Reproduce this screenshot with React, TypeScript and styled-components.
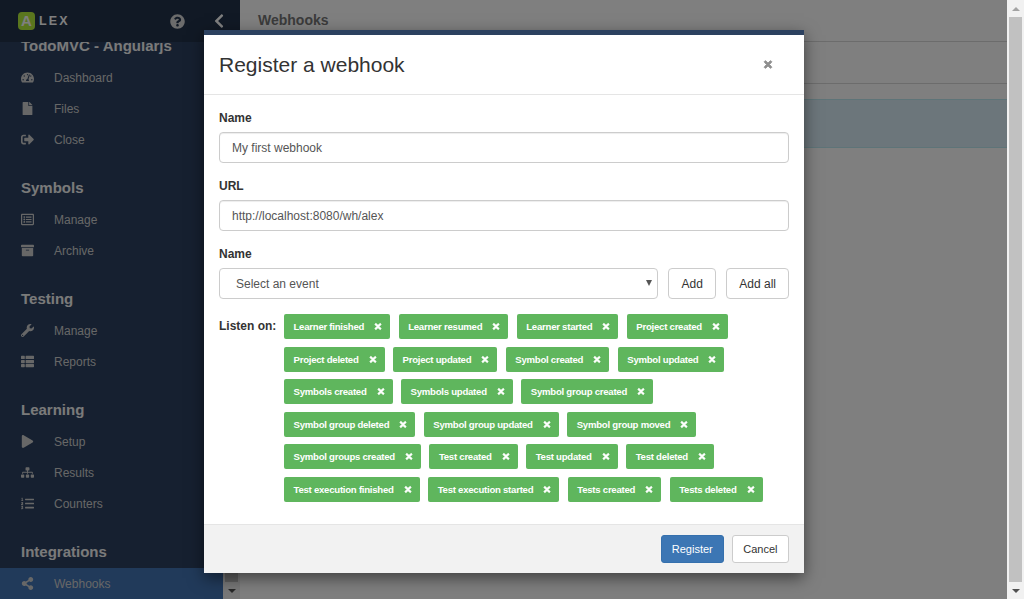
import styled, { createGlobalStyle } from "styled-components";
import {
  FaArchive,
  FaChevronLeft,
  FaFile,
  FaListOl,
  FaPlay,
  FaQuestionCircle,
  FaRegListAlt,
  FaShareAlt,
  FaSignOutAlt,
  FaSitemap,
  FaTachometerAlt,
  FaThList,
  FaTimes,
  FaWrench,
} from "react-icons/fa";

const GlobalStyle = createGlobalStyle`
  html, body {
    margin: 0;
    height: 100%;
    overflow: hidden;
    font-family: "Liberation Sans", Arial, sans-serif;
    font-size: 14px;
    color: #333;
  }
  * { box-sizing: border-box; }
`;

const Screen = styled.div`
  display: flex;
  width: 1024px;
  height: 599px;
  overflow: hidden;
`;

const Stage = styled.div`
  position: relative;
  display: flex;
  flex: 1;
  min-width: 0;
`;

const Sidebar = styled.aside`
  display: flex;
  flex-direction: column;
  width: 240px;
  background: #2c4160;
  color: #f5f5f5;
`;

const Brand = styled.div`
  position: relative;
  z-index: 1;
  display: flex;
  align-items: center;
  flex: 0 0 42px;
  padding: 0 13px 1px 18px;
  background: #22324b;
`;

const LogoMark = styled.span`
  display: flex;
  align-items: center;
  justify-content: center;
  width: 17px;
  height: 18px;
  border-radius: 4px;
  background: #b4ec3c;
  color: #fff;
  font-size: 15px;
  font-weight: bold;
`;

const LogoText = styled.span`
  margin-left: 4px;
  flex: 1;
  color: #fff;
  font-size: 12.5px;
  font-weight: bold;
  letter-spacing: 2.2px;
`;

const HelpIcon = styled(FaQuestionCircle)`
  font-size: 15px;
  color: #d8d8d8;
  margin: 1px 26px 0 0;
`;

const Collapse = styled(FaChevronLeft)`
  font-size: 16px;
  color: #fff;
`;

const SideBody = styled.div`
  display: flex;
  flex: 1;
  min-height: 0;
`;

const SideNav = styled.nav`
  display: flex;
  flex-direction: column;
  flex: 1;
  min-width: 0;
  overflow: hidden;
`;

const ProjectTitle = styled.div`
  margin-top: -5px;
  padding-left: 21px;
  height: 25px;
  line-height: 18px;
  font-size: 15px;
  font-weight: bold;
  white-space: nowrap;
`;

const Group = styled.div<{ $gap: number }>`
  display: flex;
  flex-direction: column;
  margin-top: ${({ $gap }) => $gap}px;
`;

const GroupTitle = styled.div`
  height: 32px;
  line-height: 32px;
  padding-left: 21px;
  font-size: 15px;
  font-weight: bold;
`;

const NavItem = styled.a<{ $active?: boolean }>`
  display: flex;
  align-items: center;
  height: 31px;
  padding-left: 21px;
  font-size: 12px;
  color: #cfcfcf;
  background: ${({ $active }) => ($active ? "#4274b4" : "transparent")};

  svg {
    width: 13px;
    height: 13px;
    margin-right: 20px;
    flex: none;
  }
`;

const SideScroll = styled.div`
  display: flex;
  flex-direction: column;
  justify-content: flex-end;
  width: 17px;
  background: #f1f1f1;
`;

const SideThumb = styled.div`
  height: 13px;
  margin: 0 2px;
  background: #c1c1c1;
`;

const SideArrow = styled.div`
  display: flex;
  align-items: center;
  justify-content: center;
  height: 17px;
`;

const Main = styled.main`
  display: flex;
  flex-direction: column;
  flex: 1;
  min-width: 0;
  background: #fff;
`;

const PageHead = styled.div`
  flex: 0 0 42px;
  padding: 12px 18px 0;
  font-size: 14px;
  font-weight: bold;
  color: #777;
  border-bottom: 1px solid #d8d8d8;
`;

const ActionBar = styled.div`
  flex: 0 0 42px;
  border-bottom: 1px solid #d8d8d8;
`;

const InfoBar = styled.div`
  flex: 0 0 49px;
  margin-top: 15px;
  background: #d9edf7;
  border-bottom: 1px solid #bce8f1;
  border-top: 1px solid #bce8f1;
`;

const Backdrop = styled.div`
  position: absolute;
  inset: 0;
  z-index: 2;
  background: rgba(0, 0, 0, 0.5);
`;

const Modal = styled.div`
  position: absolute;
  z-index: 3;
  left: 204px;
  top: 30px;
  display: flex;
  flex-direction: column;
  width: 600px;
  height: 543px;
  background: #fff;
  border-top: 5px solid #2c4160;
  box-shadow: 0 5px 15px rgba(0, 0, 0, 0.5);
`;

const ModalHead = styled.header`
  display: flex;
  align-items: center;
  justify-content: space-between;
  flex: 0 0 60px;
  padding: 0 31px 0 15px;
  border-bottom: 1px solid #e5e5e5;
`;

const ModalTitle = styled.h4`
  margin: 0;
  font-size: 21px;
  font-weight: normal;
  color: #333;
`;

const CloseIcon = styled(FaTimes)`
  width: 10px;
  height: 11px;
  color: #8f8f8f;
  stroke: currentColor;
  stroke-width: 40;
`;

const ModalBody = styled.div`
  display: flex;
  flex-direction: column;
  flex: 1;
  min-height: 0;
  padding: 15px;
`;

const Field = styled.div`
  display: flex;
  flex-direction: column;
  margin-bottom: 15px;
`;

const Label = styled.label`
  height: 20px;
  margin-bottom: 2px;
  line-height: 16px;
  font-size: 12px;
  font-weight: bold;
  color: #333;
`;

const TextInput = styled.div`
  display: flex;
  align-items: center;
  height: 31px;
  padding: 0 12px;
  border: 1px solid #ccc;
  border-radius: 4px;
  font-size: 12px;
  color: #555;
  box-shadow: inset 0 1px 1px rgba(0, 0, 0, 0.075);
`;

const EventRow = styled.div`
  display: flex;
  gap: 10px;
`;

const SelectBox = styled.div`
  position: relative;
  display: flex;
  align-items: center;
  flex: 1;
  height: 31px;
  padding-left: 16px;
  border: 1px solid #ccc;
  border-radius: 4px;
  font-size: 12px;
  color: #555;

  &::after {
    content: "";
    position: absolute;
    right: 5px;
    top: 11px;
    border-left: 3.5px solid transparent;
    border-right: 3.5px solid transparent;
    border-top: 6px solid #555;
  }
`;

const Button = styled.button`
  min-width: 48px;
  height: 31px;
  padding: 0 12px;
  border: 1px solid #ccc;
  border-radius: 4px;
  background: #fff;
  color: #333;
  font-family: inherit;
  font-size: 12px;
`;

const FootButton = styled(Button)<{ $primary?: boolean }>`
  height: 28px;
  padding: 0 ${({ $primary }) => ($primary ? 10 : 10.5)}px;
  border-radius: 3px;
  border-color: ${({ $primary }) => ($primary ? "#3570ad" : "#ccc")};
  background: ${({ $primary }) => ($primary ? "#3c76b4" : "#fff")};
  color: ${({ $primary }) => ($primary ? "#fff" : "#333")};
  font-size: 11px;
`;

const ListenRow = styled.div`
  display: flex;
`;

const ListenLabel = styled.div`
  flex: 0 0 65px;
  padding-top: 5px;
  font-size: 12px;
  font-weight: bold;
  color: #333;
`;

const Tags = styled.div`
  display: flex;
  flex-direction: column;
  flex: 1;
  gap: 7.5px;
`;

const TagRow = styled.div`
  display: flex;
  gap: 8.5px;
`;

const Tag = styled.span`
  display: flex;
  align-items: center;
  gap: 10px;
  height: 25px;
  padding: 0 8px 0 9.5px;
  border-radius: 2px;
  background: #5fb65d;
  color: #fff;
  font-size: 9.6px;
  font-weight: bold;
  letter-spacing: -0.25px;
  white-space: nowrap;

  svg {
    width: 8px;
    height: 9px;
    stroke: currentColor;
    stroke-width: 40;
  }
`;

const ModalFoot = styled.footer`
  display: flex;
  align-items: center;
  justify-content: flex-end;
  gap: 8px;
  flex: 0 0 49px;
  padding: 0 15px;
  background: #f2f2f2;
  border-top: 1px solid #e5e5e5;
`;

const PageScroll = styled.div`
  display: flex;
  flex-direction: column;
  width: 17px;
  background: #f1f1f1;
`;

const PageThumb = styled.div`
  flex: 1;
  margin: 0 2px;
  background: #c1c1c1;
`;

const Arrow = styled.div<{ $up?: boolean; $color?: string }>`
  width: 0;
  height: 0;
  border-left: 4px solid transparent;
  border-right: 4px solid transparent;
  ${({ $up, $color = "#505050" }) =>
    $up ? `border-bottom: 4px solid ${$color};` : `border-top: 4px solid ${$color};`}
`;

const PageArrow = styled(SideArrow)`
  flex: none;
`;

const EVENT_ROWS = [
  ["Learner finished", "Learner resumed", "Learner started", "Project created"],
  ["Project deleted", "Project updated", "Symbol created", "Symbol updated"],
  ["Symbols created", "Symbols updated", "Symbol group created"],
  ["Symbol group deleted", "Symbol group updated", "Symbol group moved"],
  ["Symbol groups created", "Test created", "Test updated", "Test deleted"],
  ["Test execution finished", "Test execution started", "Tests created", "Tests deleted"],
];

export default function App() {
  return (
    <Screen>
      <GlobalStyle />
      <Stage>
        <Sidebar>
          <Brand>
            <LogoMark>A</LogoMark>
            <LogoText>LEX</LogoText>
            <HelpIcon />
            <Collapse />
          </Brand>
          <SideBody>
            <SideNav>
              <ProjectTitle>TodoMVC - Angularjs</ProjectTitle>
              <Group $gap={0}>
                <NavItem><FaTachometerAlt />Dashboard</NavItem>
                <NavItem><FaFile />Files</NavItem>
                <NavItem><FaSignOutAlt />Close</NavItem>
              </Group>
              <Group $gap={17}>
                <GroupTitle>Symbols</GroupTitle>
                <NavItem><FaRegListAlt />Manage</NavItem>
                <NavItem><FaArchive />Archive</NavItem>
              </Group>
              <Group $gap={17}>
                <GroupTitle>Testing</GroupTitle>
                <NavItem><FaWrench />Manage</NavItem>
                <NavItem><FaThList />Reports</NavItem>
              </Group>
              <Group $gap={17}>
                <GroupTitle>Learning</GroupTitle>
                <NavItem><FaPlay />Setup</NavItem>
                <NavItem><FaSitemap />Results</NavItem>
                <NavItem><FaListOl />Counters</NavItem>
              </Group>
              <Group $gap={17}>
                <GroupTitle>Integrations</GroupTitle>
                <NavItem $active><FaShareAlt />Webhooks</NavItem>
              </Group>
            </SideNav>
            <SideScroll>
              <SideThumb />
              <SideArrow><Arrow /></SideArrow>
            </SideScroll>
          </SideBody>
        </Sidebar>
        <Main>
          <PageHead>Webhooks</PageHead>
          <ActionBar />
          <InfoBar />
        </Main>
        <Backdrop />
        <Modal>
          <ModalHead>
            <ModalTitle>Register a webhook</ModalTitle>
            <CloseIcon />
          </ModalHead>
          <ModalBody>
            <Field>
              <Label>Name</Label>
              <TextInput>My first webhook</TextInput>
            </Field>
            <Field>
              <Label>URL</Label>
              <TextInput>http://localhost:8080/wh/alex</TextInput>
            </Field>
            <Field>
              <Label>Name</Label>
              <EventRow>
                <SelectBox>Select an event</SelectBox>
                <Button>Add</Button>
                <Button>Add all</Button>
              </EventRow>
            </Field>
            <ListenRow>
              <ListenLabel>Listen on:</ListenLabel>
              <Tags>
                {EVENT_ROWS.map((row) => (
                  <TagRow key={row[0]}>
                    {row.map((event) => (
                      <Tag key={event}>
                        {event}
                        <FaTimes />
                      </Tag>
                    ))}
                  </TagRow>
                ))}
              </Tags>
            </ListenRow>
          </ModalBody>
          <ModalFoot>
            <FootButton $primary>Register</FootButton>
            <FootButton>Cancel</FootButton>
          </ModalFoot>
        </Modal>
      </Stage>
      <PageScroll>
        <PageArrow><Arrow $up $color="#a3a3a3" /></PageArrow>
        <PageThumb />
        <PageArrow><Arrow /></PageArrow>
      </PageScroll>
    </Screen>
  );
}
